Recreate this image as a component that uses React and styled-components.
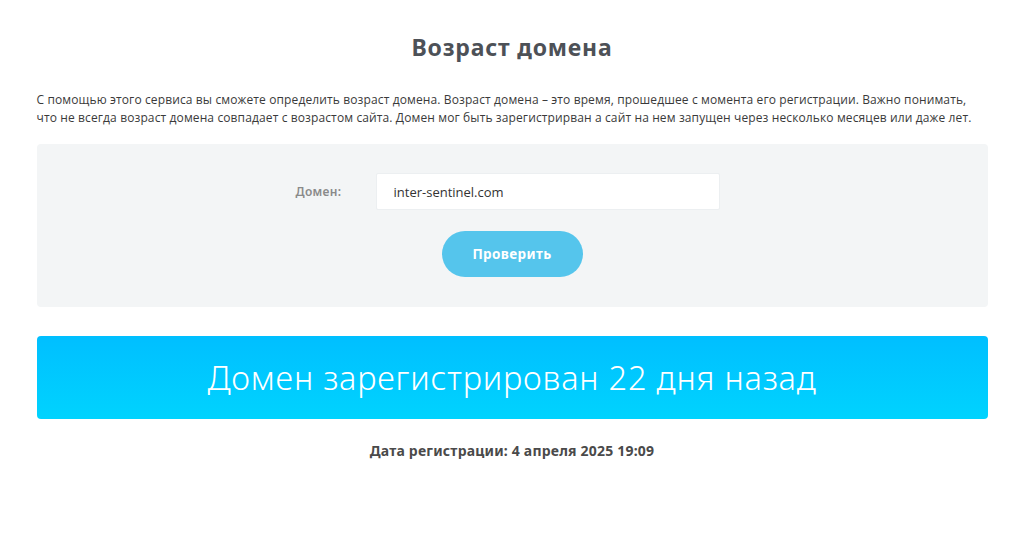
import React from "react";
import styled, { createGlobalStyle } from "styled-components";

const Global = createGlobalStyle`
  html, body { margin: 0; padding: 0; background: #fff; }
  body { font-family: "Open Sans", "Noto Sans", sans-serif; color: #444; }
  * { box-sizing: border-box; }
`;

const Page = styled.main`
  width: 951px;
  margin: 0 auto;
  padding-top: 32px;
  display: flex;
  flex-direction: column;
`;

const Title = styled.h1`
  margin: 0;
  text-align: center;
  font-family: "Noto Sans", sans-serif;
  font-weight: 700;
  font-size: 23px;
  letter-spacing: 0.8px;
  line-height: 30px;
  color: #4d5157;
`;

const Intro = styled.p`
  margin: 29px 0 0;
  font-family: "Open Sans", sans-serif;
  font-size: 12px;
  letter-spacing: 0.12px;
  line-height: 18px;
  color: #3a3a3a;
`;

const Panel = styled.section`
  margin-top: 17px;
  background: #f3f5f6;
  border-radius: 4px;
  height: 163px;
  padding-top: 29px;
  display: flex;
  flex-direction: column;
  align-items: center;
`;

const Row = styled.div`
  display: flex;
  align-items: center;
  margin-right: 9px;
`;

const Label = styled.label`
  width: 50px;
  font-family: "Noto Sans", sans-serif;
  font-weight: 600;
  font-size: 12px;
  letter-spacing: 0.3px;
  color: #8a8a8a;
  margin-right: 30px;
`;

const Input = styled.input`
  width: 344px;
  height: 37px;
  border: 1px solid #eceff1;
  border-radius: 2px;
  background: #fff;
  padding: 0 17px;
  font-family: "Open Sans", sans-serif;
  font-size: 13px;
  color: #333;
  outline: none;
`;

const Button = styled.button`
  margin-top: 21px;
  width: 141px;
  height: 46px;
  border: none;
  border-radius: 23px;
  background: #55c5ec;
  color: #fff;
  font-family: "Noto Sans", sans-serif;
  font-weight: 700;
  font-size: 13.5px;
  letter-spacing: 0.4px;
  cursor: pointer;
`;

const Banner = styled.div`
  margin-top: 29px;
  height: 83px;
  border-radius: 4px;
  background: linear-gradient(180deg, #00bfff 0%, #00d3fe 100%);
  display: flex;
  align-items: center;
  justify-content: center;
  color: #fff;
  font-family: "Noto Sans", sans-serif;
  font-weight: 300;
  font-size: 32.5px;
  letter-spacing: 0.8px;
`;

const DateLine = styled.p`
  margin: 22px 0 0;
  text-align: center;
  font-family: "Noto Sans", sans-serif;
  font-weight: 700;
  font-size: 14px;
  letter-spacing: 0.2px;
  color: #4a4a4a;
`;

export default function App() {
  return (
    <>
      <Global />
      <Page>
        <Title>Возраст домена</Title>
        <Intro>
          С помощью этого сервиса вы сможете определить возраст домена. Возраст домена – это время, прошедшее с момента его регистрации. Важно понимать, что не всегда возраст домена совпадает с возрастом сайта. Домен мог быть зарегистрирван а сайт на нем запущен через несколько месяцев или даже лет.
        </Intro>
        <Panel>
          <Row>
            <Label htmlFor="domain">Домен:</Label>
            <Input id="domain" defaultValue="inter-sentinel.com" />
          </Row>
          <Button>Проверить</Button>
        </Panel>
        <Banner>Домен зарегистрирован 22 дня назад</Banner>
        <DateLine>Дата регистрации: 4 апреля 2025 19:09</DateLine>
      </Page>
    </>
  );
}
